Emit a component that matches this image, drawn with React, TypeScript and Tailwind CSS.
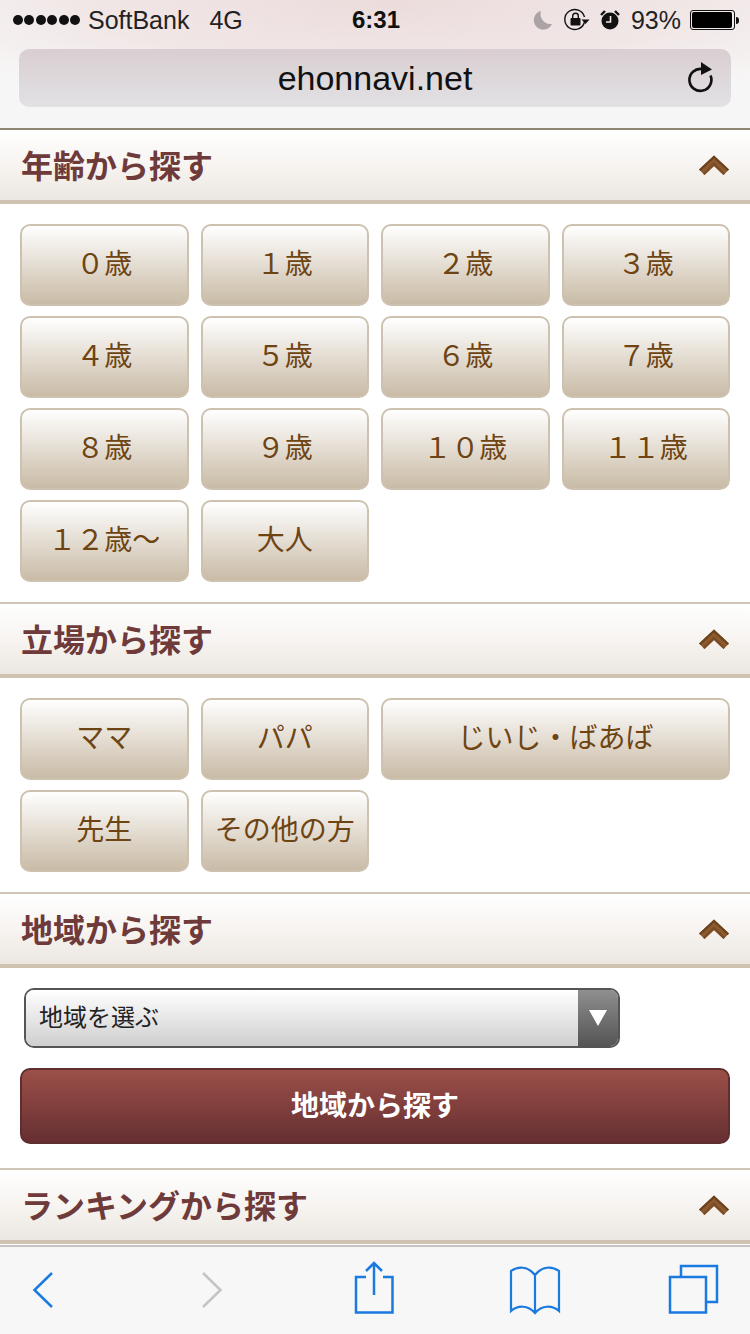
const sans = 'font-["Liberation_Sans","Noto_Sans_CJK_JP",sans-serif]';

const Chevron = () => (
  <svg width="32" height="21" viewBox="0 0 32 21" className="mr-[4px] mt-[1px]">
    <path d="M1 14.5 L16 0.5 L31 14.5 L25.5 20 L16 11 L6.5 20 Z" fill="#8d5a2e" />
    <path d="M1 14.5 L16 0.5 L31 14.5 L29.5 16 L16 3.5 L2.5 16 Z" fill="#6a431f" />
    <path d="M16 7 L16 11 L6.5 20 L5 18.5 Z M16 7 L16 11 L25.5 20 L27 18.5 Z" fill="#7b4d26" />
  </svg>
);

const SectionHeader = ({ title }: { title: string }) => (
  <div className="flex h-[76px] items-center justify-between border-t-2 border-b-4 border-t-[#cfc6b8] border-b-[#d0c2b0] bg-gradient-to-b from-white via-[#f7f4f1] to-[#ece7e1] pl-[21px] pr-[16px]">
    <h2 className="pt-[3px] text-[32px] leading-none font-bold text-[#6e3a3a]">{title}</h2>
    <Chevron />
  </div>
);

const Choice = ({ label, wide }: { label: string; wide?: boolean }) => (
  <button
    className={`flex h-[82px] items-center justify-center rounded-[10px] border-2 border-[#cdc2b0] bg-gradient-to-b from-white to-[#c9bba6] text-[28px] leading-none text-[#6e4413] ${wide ? 'col-span-2' : ''}`}
  >
    {label}
  </button>
);

const ChoiceGrid = ({ children }: { children: React.ReactNode }) => (
  <div className="grid grid-cols-4 gap-x-[12px] gap-y-[10px] px-[20px] pt-[20px] pb-[20px]">{children}</div>
);

const StatusIcons = () => (
  <div className="flex items-center">
    {/* moon */}
    <svg width="20" height="20" viewBox="0 0 20 20" className="mr-[11px]">
      <path d="M8 1 A9.5 9.5 0 1 0 19 14 A10 10 0 0 1 8 1 Z" fill="#aba3a5" />
    </svg>
    {/* rotation lock */}
    <svg width="26" height="24" viewBox="0 0 26 24" className="mr-[10px]">
      <path d="M20.5 14 A10 10 0 1 1 20.5 9" fill="none" stroke="#111" strokeWidth="1.4" />
      <path d="M17.5 11.5 L25.5 11.5 L21.5 16 Z" fill="#111" />
      <rect x="6.5" y="10" width="10" height="7.5" rx="1" fill="#111" />
      <path d="M8.7 10 V8 A2.8 2.8 0 0 1 14.3 8 V10" fill="none" stroke="#111" strokeWidth="1.4" />
    </svg>
    {/* alarm */}
    <svg width="20" height="20" viewBox="0 0 20 20" className="mr-[11px]">
      <circle cx="10" cy="11" r="8.5" fill="#111" />
      <path d="M10.5 6 V12 H6" fill="none" stroke="#f2e6e6" strokeWidth="1.6" />
      <path d="M1 5 L5 1 M19 5 L15 1" stroke="#111" strokeWidth="2.4" />
    </svg>
    <span className="mr-[9px] text-[25px] leading-none text-[#222]">93%</span>
    {/* battery */}
    <div className="flex items-center">
      <div className="flex h-[20px] w-[45px] items-center rounded-[3px] border border-[#111] p-[1px]">
        <div className="h-full w-[40px] rounded-[2px] bg-black" />
      </div>
      <div className="ml-[1px] h-[7px] w-[3px] rounded-r-full bg-[#111]" />
    </div>
  </div>
);

const Browser = () => (
  <div className="h-[128px] bg-[radial-gradient(ellipse_520px_110px_at_52%_0%,#ecdcdc,#f1e7e7_60%,#f7f6f6_100%)]">
    <div className="relative flex h-[40px] items-center justify-between pl-[13px] pr-[11px]">
      <div className="flex items-center text-[25px] leading-none text-[#222]">
        <span className="flex gap-[1.4px]">
          {[0, 1, 2, 3, 4, 5].map((i) => (
            <span key={i} className="h-[10px] w-[10px] rounded-full bg-[#111]" />
          ))}
        </span>
        <span className="ml-[8px]">SoftBank</span>
        <span className="ml-[20px]">4G</span>
      </div>
      <span className="absolute left-[352px] text-[24px] leading-none font-bold text-[#111]">6:31</span>
      <StatusIcons />
    </div>
    <div className="relative mx-[19px] mt-[9px] flex h-[58px] items-center justify-center rounded-[10px] bg-gradient-to-b from-[#d9ced1] to-[#e2e1e4]">
      <span className="text-[34px] leading-none text-[#111]">ehonnavi.net</span>
      <svg width="30" height="34" viewBox="0 0 30 34" className="absolute right-[14px] top-[12px]">
        <path d="M23.5 14.5 A11 11 0 1 1 15 8" fill="none" stroke="#111" strokeWidth="2.6" />
        <path d="M14 1 L25 8.5 L14 14 Z" fill="#111" />
      </svg>
    </div>
  </div>
);

const Toolbar = () => (
  <div className="flex h-[89px] items-center border-t-2 border-[#c4c3c3] bg-[#f7f7f8]">
    <svg width="750" height="87" viewBox="0 0 750 87" fill="none" stroke="#1a7ae0" strokeWidth="2">
      {/* back / forward */}
      <path d="M52 26 L34.5 43 L52 60" strokeWidth="2.5" />
      <path d="M203 26 L220.5 43 L203 60" stroke="#c4c4c4" strokeWidth="2.5" />
      {/* share */}
      <path d="M366 30 H356 V65.5 H392.5 V30 H383" strokeWidth="2.5" />
      <path d="M374 48 V16 M366 24 L374 16 L382 24" strokeWidth="2.5" />
      {/* bookmarks */}
      <path d="M535 28 C528 19 518 19 511 24 V64 C518 58 528 58 535 66 C542 58 552 58 559 64 V24 C552 19 542 19 535 28 V66" strokeWidth="2.2" />
      {/* tabs */}
      <rect x="670" y="30" width="36" height="35.5" strokeWidth="2.5" />
      <path d="M681 30 V19 H717 V55 H706" strokeWidth="2.5" />
    </svg>
  </div>
);

export default function App() {
  return (
    <div className={`flex h-[1334px] w-[750px] flex-col overflow-hidden bg-white ${sans}`}>
      <Browser />
      <main className="h-[1117px] overflow-hidden border-t-2 border-[#8f8672] [&>div:first-child]:border-t-0 [&>div:first-child]:h-[74px]">
        <SectionHeader title="年齢から探す" />
        <ChoiceGrid>
          {['０歳', '１歳', '２歳', '３歳', '４歳', '５歳', '６歳', '７歳', '８歳', '９歳', '１０歳', '１１歳', '１２歳〜', '大人'].map((age) => (
            <Choice key={age} label={age} />
          ))}
        </ChoiceGrid>
        <SectionHeader title="立場から探す" />
        <ChoiceGrid>
          <Choice label="ママ" />
          <Choice label="パパ" />
          <Choice label="じいじ・ばあば" wide />
          <Choice label="先生" />
          <Choice label="その他の方" />
        </ChoiceGrid>
        <SectionHeader title="地域から探す" />
        <div className="px-[20px] pt-[20px] pb-[24px]">
          <div className="ml-[4px] flex h-[60px] w-[596px] overflow-hidden rounded-[10px] border-2 border-[#555]">
            <div className="flex flex-1 items-center bg-gradient-to-b from-white to-[#cfcfcf] pl-[13px] text-[24px] leading-none text-[#222]">
              地域を選ぶ
            </div>
            <div className="flex w-[40px] items-center justify-center bg-gradient-to-b from-[#8f8f8f] to-[#555]">
              <svg width="18" height="16" viewBox="0 0 18 16">
                <path d="M0 0 H18 L9 16 Z" fill="#fff" />
              </svg>
            </div>
          </div>
          <button className="mt-[20px] h-[76px] w-full rounded-[10px] border-2 border-[#5f2f2f] bg-gradient-to-b from-[#9c5049] to-[#662f31] pt-[2px] text-[28px] leading-none font-bold text-white">
            地域から探す
          </button>
        </div>
        <SectionHeader title="ランキングから探す" />
      </main>
      <Toolbar />
    </div>
  );
}
